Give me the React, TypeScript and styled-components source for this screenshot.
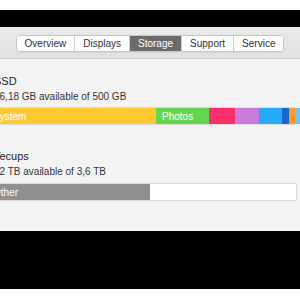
import { FC } from 'react';
import styled, { createGlobalStyle } from 'styled-components';

const GlobalStyle = createGlobalStyle`
    html, body {
        margin: 0;
        padding: 0;
        background: #fff;
        overflow: hidden;
    }
    body {
        font-family: "Liberation Sans", Arial, sans-serif;
    }
`;

const Page = styled.div`
    width: 300px;
    height: 300px;
    padding: 10px 0;
    box-sizing: border-box;
    background: #fff;
`;

const Frame = styled.div`
    background: #000;
    padding: 17px 0 58px;
`;

const Window = styled.div`
    background: #f3f3f3;
    overflow: hidden;
`;

const Toolbar = styled.div`
    height: 32px;
    box-sizing: border-box;
    padding-top: 8px;
    display: flex;
    justify-content: center;
    align-items: flex-start;
    background: linear-gradient(#e9e9e9, #e1e1e1);
    border-bottom: 1px solid #cdcdcd;
`;

const Segmented = styled.div`
    display: flex;
    height: 17px;
    box-sizing: border-box;
    border: 1px solid #c6c6c6;
    border-radius: 4px;
    background: #fff;
    box-shadow: 0 1px 0 rgba(0, 0, 0, 0.05);
    overflow: hidden;
`;

const Tab = styled.div<{ $active?: boolean }>`
    display: flex;
    align-items: center;
    padding: 0 8px;
    font-size: 10px;
    color: ${p => (p.$active ? '#fff' : '#333')};
    background: ${p => (p.$active ? '#6b6b6b' : '#fcfcfc')};
    & + & {
        border-left: 1px solid #cfcfcf;
    }
`;

const Content = styled.div`
    height: 172px;
    box-sizing: border-box;
    margin-left: -6px;
    padding: 16px 3px 0 0;
    display: flex;
    flex-direction: column;
`;

const Title = styled.div<{ $gap?: number }>`
    margin-top: ${p => p.$gap ?? 0}px;
    font-size: 11px;
    line-height: 13px;
    color: #1f1f1f;
    white-space: nowrap;
`;

const Sub = styled.div`
    margin-top: 3px;
    font-size: 10px;
    line-height: 12px;
    color: #333;
    white-space: nowrap;
`;

const Bar = styled.div<{ $gap: number }>`
    margin: ${p => p.$gap}px 0 0 -8px;
    height: 18px;
    box-sizing: border-box;
    border: 1px solid #d9d9d9;
    background: #fff;
    display: flex;
`;

const Segment = styled.div<{ $color: string; $w?: number }>`
    flex: ${p => (p.$w ? `0 0 ${p.$w}px` : '1 1 auto')};
    background: ${p => p.$color};
    display: flex;
    align-items: center;
    padding-left: 6px;
    box-sizing: border-box;
    font-size: 10px;
    color: #fff;
    white-space: nowrap;
    overflow: hidden;
`;

const tabs = ['Overview', 'Displays', 'Storage', 'Support', 'Service'];

const ssd = [
    { label: 'System', color: '#fec930', w: 169 },
    { label: 'Photos', color: '#63d84f', w: 53 },
    { label: '', color: '#fc2e69', w: 26 },
    { label: '', color: '#c97adb', w: 24 },
    { label: '', color: '#25acf3', w: 23 },
    { label: '', color: '#1c64d3', w: 7 },
    { label: '', color: '#fd9a1f', w: 2.5 },
    { label: '', color: '#6ec6f3', w: 2 },
];

const App: FC = () => {
    return <Page>
        <GlobalStyle/>
        <Frame>
            <Window>
                <Toolbar>
                    <Segmented>
                        {tabs.map(t => <Tab key={t} $active={t === 'Storage'}>{t}</Tab>)}
                    </Segmented>
                </Toolbar>
                <Content>
                    <Title>SSD</Title>
                    <Sub>26,18 GB available of 500 GB</Sub>
                    <Bar $gap={4}>
                        {ssd.map((s, i) => <Segment key={i} $color={s.color} $w={s.w}>{s.label}</Segment>)}
                        <Segment $color={'#fff'}/>
                    </Bar>

                    <Title $gap={25}>Tecups</Title>
                    <Sub>12 TB available of 3,6 TB</Sub>
                    <Bar $gap={5}>
                        <Segment $color={'#8f8f8f'} $w={163}>Other</Segment>
                        <Segment $color={'#fff'}/>
                    </Bar>
                </Content>
            </Window>
        </Frame>
    </Page>;
};

export default App;
